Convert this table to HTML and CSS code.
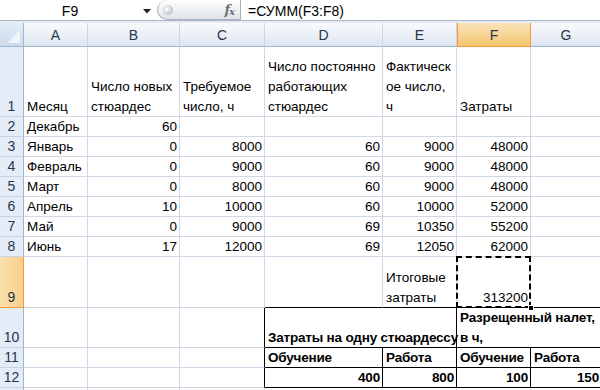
FILE: index.html
```
<!DOCTYPE html>
<html lang="ru">
<head>
<meta charset="utf-8">
<title>Затраты</title>
<link rel="stylesheet" href="styles.css">
</head>
<body>
<div class="app">
  <div class="fbar">
    <div class="namebox"><span class="name">F9</span>
      <svg class="dd" width="8" height="5" viewBox="0 0 8 5"><path d="M0 0H8L4 4.5Z" fill="#222"/></svg>
    </div>
    <div class="pill"><span class="grip"></span><span class="fx">f<sub>x</sub></span></div>
    <div class="formula">=СУММ(F3:F8)</div>
  </div>
  <div class="gap"></div>
  <div class="sheet">
    <div class="corner"><span class="tri"></span></div>
    <div class="ch">A</div><div class="ch">B</div><div class="ch">C</div><div class="ch">D</div><div class="ch">E</div><div class="ch sel">F</div><div class="ch">G</div>

    <div class="rh">1</div>
    <div class="c"><span>Месяц</span></div>
    <div class="c"><span>Число новых<br>стюардес</span></div>
    <div class="c"><span>Требуемое<br>число, ч</span></div>
    <div class="c"><span>Число постоянно<br>работающих<br>стюардес</span></div>
    <div class="c"><span>Фактическ<br>ое число,<br>ч</span></div>
    <div class="c"><span>Затраты</span></div>
    <div class="c"></div>

    <div class="rh">2</div>
    <div class="c"><span>Декабрь</span></div>
    <div class="c r"><span>60</span></div>
    <div class="c"></div><div class="c"></div><div class="c"></div><div class="c"></div><div class="c"></div>

    <div class="rh">3</div>
    <div class="c"><span>Январь</span></div>
    <div class="c r"><span>0</span></div>
    <div class="c r"><span>8000</span></div>
    <div class="c r"><span>60</span></div>
    <div class="c r"><span>9000</span></div>
    <div class="c r"><span>48000</span></div>
    <div class="c"></div>

    <div class="rh">4</div>
    <div class="c"><span>Февраль</span></div>
    <div class="c r"><span>0</span></div>
    <div class="c r"><span>9000</span></div>
    <div class="c r"><span>60</span></div>
    <div class="c r"><span>9000</span></div>
    <div class="c r"><span>48000</span></div>
    <div class="c"></div>

    <div class="rh">5</div>
    <div class="c"><span>Март</span></div>
    <div class="c r"><span>0</span></div>
    <div class="c r"><span>8000</span></div>
    <div class="c r"><span>60</span></div>
    <div class="c r"><span>9000</span></div>
    <div class="c r"><span>48000</span></div>
    <div class="c"></div>

    <div class="rh">6</div>
    <div class="c"><span>Апрель</span></div>
    <div class="c r"><span>10</span></div>
    <div class="c r"><span>10000</span></div>
    <div class="c r"><span>60</span></div>
    <div class="c r"><span>10000</span></div>
    <div class="c r"><span>52000</span></div>
    <div class="c"></div>

    <div class="rh">7</div>
    <div class="c"><span>Май</span></div>
    <div class="c r"><span>0</span></div>
    <div class="c r"><span>9000</span></div>
    <div class="c r"><span>69</span></div>
    <div class="c r"><span>10350</span></div>
    <div class="c r"><span>55200</span></div>
    <div class="c"></div>

    <div class="rh">8</div>
    <div class="c"><span>Июнь</span></div>
    <div class="c r"><span>17</span></div>
    <div class="c r"><span>12000</span></div>
    <div class="c r"><span>69</span></div>
    <div class="c r"><span>12050</span></div>
    <div class="c r"><span>62000</span></div>
    <div class="c"></div>

    <div class="rh sel">9</div>
    <div class="c"></div><div class="c"></div><div class="c"></div>
    <div class="c bb"></div>
    <div class="c bb"><span>Итоговые<br>затраты</span></div>
    <div class="c bb r"><span>313200</span></div>
    <div class="c bb"></div>

    <div class="rh">10</div>
    <div class="c"></div><div class="c"></div><div class="c br"></div>
    <div class="c bx bo span2"><span>Затраты на одну стюардессу</span></div>
    <div class="c bx bo span2"><span>Разрещенный налет,<br>в ч,</span></div>

    <div class="rh">11</div>
    <div class="c"></div><div class="c"></div><div class="c br"></div>
    <div class="c bx bo"><span>Обучение</span></div>
    <div class="c bx bo"><span>Работа</span></div>
    <div class="c bx bo"><span>Обучение</span></div>
    <div class="c bx bo"><span>Работа</span></div>

    <div class="rh">12</div>
    <div class="c"></div><div class="c"></div><div class="c br"></div>
    <div class="c bx bo r"><span>400</span></div>
    <div class="c bx bo r"><span>800</span></div>
    <div class="c bx bo r"><span>100</span></div>
    <div class="c bx bo r"><span>150</span></div>

    <div class="rh"></div>
    <div class="c"></div><div class="c"></div><div class="c"></div><div class="c"></div><div class="c"></div><div class="c"></div><div class="c"></div>

    <div class="ants"><span class="handle"></span></div>
  </div>
</div>
</body>
</html>
```
FILE: styles.css
```
* { box-sizing: border-box; }
html, body { margin: 0; padding: 0; background: #fff; }
body { font-family: "Liberation Sans", Arial, sans-serif; font-size: 13.5px; color: #000; }
.app { width: 600px; height: 390px; overflow: hidden; }

.fbar { height: 21px; display: flex; align-items: stretch; border-bottom: 1px solid #a7b6c9; background: #fff; }
.namebox { width: 157px; display: flex; align-items: center; position: relative; }
.namebox .name { width: 140px; text-align: center; font-size: 14px; padding-top: 1px; }
.namebox .dd { margin-left: 3px; margin-top: 2px; }
.pill { width: 84px; display: flex; align-items: center; justify-content: space-between; padding: 0 5px 0 5px;
  border: 1px solid #a9b2be; border-top: none; border-top-left-radius: 12px; border-bottom-left-radius: 12px;
  background: linear-gradient(#ffffff, #eef1f5 55%, #dfe4ea); }
.grip { width: 10px; height: 10px; border-radius: 50%; background: radial-gradient(circle at 40% 40%, #ffffff, #c9ccd1 60%, #aeb3ba); }
.fx { font-family: "DejaVu Serif", "Liberation Serif", serif; font-style: italic; font-weight: bold; font-size: 13px; color: #6b6f76; letter-spacing: -1px; margin-right: 1px; }
.fx sub { font-size: 10px; vertical-align: -1px; }
.formula { padding-left: 7px; display: flex; align-items: center; font-size: 14px; padding-top: 1px; }
.gap { height: 2px; background: #e6ebf2; }

.sheet { position: relative; display: grid;
  grid-template-columns: 24px 64px 92px 85px 118px 74px 74px 71px;
  grid-template-rows: 24px 70px repeat(7, 20px) 51px 40px 20px 20px 40px; }

.corner { background: linear-gradient(#e3ecf8, #cbdaee); border-right: 1px solid #9eb6ce; border-bottom: 1px solid #9eb6ce; position: relative; }
.tri { position: absolute; right: 3px; bottom: 3px; width: 0; height: 0; border-left: 13px solid transparent; border-bottom: 13px solid #eef3f9; }
.ch { background: linear-gradient(#f8fafc, #e9eef5 60%, #dde5ef); border-right: 1px solid #cdd7e3; border-bottom: 1px solid #9eb6ce;
  display: flex; align-items: center; justify-content: center; color: #27354a; font-size: 14px; padding-top: 1px; }
.ch.sel { background: linear-gradient(#fbe3b6, #f8d597 50%, #f4c46c); border: 1px solid #f29a3c; border-top: none; }
.rh { background: #e4ecf7; border-right: 1px solid #9eb6ce; border-bottom: 1px solid #c5d3e3;
  display: flex; align-items: flex-end; justify-content: center; color: #27354a; line-height: 19px; font-size: 14px; }
.rh.sel { background: linear-gradient(90deg, #fbe0ad, #f7cf8a); border-bottom-color: #f29a3c; border-right-color: #f29a3c; }

.c { border-right: 1px solid #d0d7e5; border-bottom: 1px solid #d0d7e5; display: flex; align-items: flex-end;
  padding: 0 2px 0 3px; white-space: nowrap; line-height: 20px; min-width: 0; }
.c span { display: block; margin-bottom: -1px; }
.c.r { justify-content: flex-end; }
.c.bo { font-weight: bold; letter-spacing: -0.2px; }
.c.span2 { grid-column: span 2; }
.c.br { border-right-color: #000; }
.c.bb { border-bottom-color: #000; }
.c.bx { border-right-color: #000; border-bottom-color: #000; }

.ants { position: absolute; left: 456px; top: 233px; width: 75px; height: 52px;
  border: 2px dashed #000; pointer-events: none; }
.handle { position: absolute; right: -5px; bottom: -5px; width: 6px; height: 6px; background: #000; border: 1px solid #fff; z-index: 2; }
```
